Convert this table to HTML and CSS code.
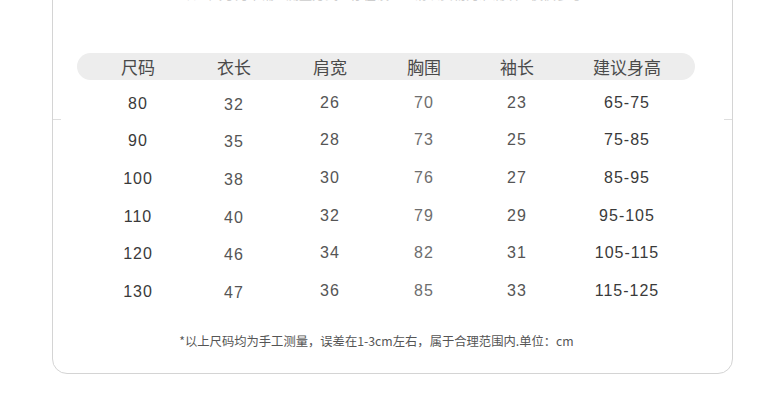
FILE: index.html
```html
<!DOCTYPE html>
<html lang="zh-CN">
<head>
<meta charset="utf-8">
<title>尺码表</title>
<link rel="stylesheet" href="styles.css">
</head>
<body>
<div class="card">
  <div class="intro">
    <span>以上尺寸为平铺</span><span>测量方式</span><span>存在误差</span><span>请以实物为准确认</span><span>仅供参考</span>
  </div>
  <div class="table">
    <div class="row head">
      <div class="c c1">尺码</div>
      <div class="c c2">衣长</div>
      <div class="c c3">肩宽</div>
      <div class="c c4">胸围</div>
      <div class="c c5">袖长</div>
      <div class="c c6">建议身高</div>
    </div>
    <div class="row">
      <div class="c c1">80</div><div class="c c2">32</div><div class="c c3">26</div><div class="c c4">70</div><div class="c c5">23</div><div class="c c6">65-75</div>
    </div>
    <div class="row">
      <div class="c c1">90</div><div class="c c2">35</div><div class="c c3">28</div><div class="c c4">73</div><div class="c c5">25</div><div class="c c6">75-85</div>
    </div>
    <div class="row">
      <div class="c c1">100</div><div class="c c2">38</div><div class="c c3">30</div><div class="c c4">76</div><div class="c c5">27</div><div class="c c6">85-95</div>
    </div>
    <div class="row">
      <div class="c c1">110</div><div class="c c2">40</div><div class="c c3">32</div><div class="c c4">79</div><div class="c c5">29</div><div class="c c6">95-105</div>
    </div>
    <div class="row">
      <div class="c c1">120</div><div class="c c2">46</div><div class="c c3">34</div><div class="c c4">82</div><div class="c c5">31</div><div class="c c6">105-115</div>
    </div>
    <div class="row">
      <div class="c c1">130</div><div class="c c2">47</div><div class="c c3">36</div><div class="c c4">85</div><div class="c c5">33</div><div class="c c6">115-125</div>
    </div>
  </div>
  <p class="note">*以上尺码均为手工测量，误差在1-3cm左右，属于合理范围内.单位：cm</p>
</div>
</body>
</html>
```

FILE: styles.css
```css
html, body {
  margin: 0;
  padding: 0;
  background: #ffffff;
  overflow: hidden;
}

body {
  width: 783px;
  height: 419px;
  font-family: "Liberation Sans", "Noto Sans CJK SC", sans-serif;
}

.card {
  position: relative;
  box-sizing: border-box;
  width: 681px;
  margin: -43px 0 0 52px;
  padding: 28px 0 24px 0;
  border: 1px solid #d4d4d4;
  border-radius: 0 0 15px 15px;
  background: #ffffff;
}

.card::before,
.card::after {
  content: "";
  position: absolute;
  top: 161px;
  width: 8px;
  height: 1px;
  background: #dedede;
}

.card::before { left: 0; }
.card::after { right: 0; }

.intro {
  display: flex;
  justify-content: center;
  gap: 12px;
  height: 16px;
  padding-right: 20px;
  font-family: "Noto Sans CJK SC", sans-serif;
  font-size: 13px;
  line-height: 16px;
  color: #cdcdcd;
  white-space: nowrap;
}

.table {
  margin: 51px 0 0 24px;
  width: 618px;
}

.row {
  display: grid;
  grid-template-columns: 96px 96px 96px 92px 94px 126px;
  padding-left: 13px;
  height: 37.6px;
  align-items: center;
}

.row.head {
  height: 27px;
  margin-bottom: 4px;
  border-radius: 14px;
  background: #ededed;
}

.c {
  text-align: center;
  font-size: 16px;
  letter-spacing: 1px;
  color: #555555;
}

.head .c {
  font-family: "Noto Sans CJK SC", sans-serif;
  font-size: 17px;
  letter-spacing: 0;
  line-height: 27px;
  color: #4a4a4a;
  padding: 0;
}

.c1 { color: #3a3a3a; padding-top: 2px; }
.c2 { padding-top: 4px; }
.c4 { color: #6e6e6e; }
.c6 { color: #3a3a3a; }

.note {
  margin: 23px 0 0 0;
  padding-right: 32px;
  text-align: center;
  font-family: "Noto Sans CJK SC", sans-serif;
  font-size: 12.3px;
  line-height: 16px;
  color: #555555;
}
```
